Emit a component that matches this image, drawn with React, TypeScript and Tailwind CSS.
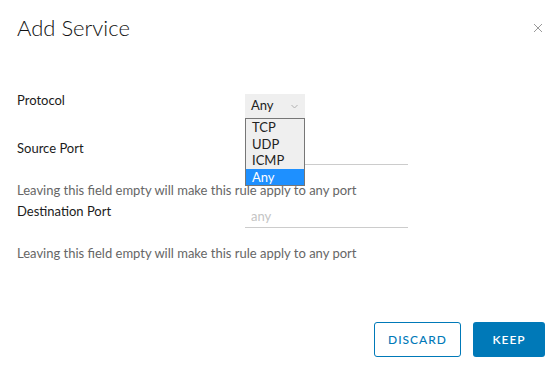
import React from "react";

const options = ["TCP", "UDP", "ICMP", "Any"];

function Row({ label, children }: { label: string; children: React.ReactNode }) {
  return (
    <div className="flex items-start">
      <div className="w-[228px] shrink-0 text-[13px] leading-4 text-[#1b1b1b]">{label}</div>
      {children}
    </div>
  );
}

function PortInput() {
  return (
    <input
      className="mt-px h-6 w-[163px] border-b border-[#cccccc] bg-transparent px-[6px] text-[13px] text-[#333] outline-none placeholder:text-[#c4c4c4]"
      placeholder="any"
    />
  );
}

function Help() {
  return (
    <p className="text-[13px] leading-4 text-[#666666]">
      Leaving this field empty will make this rule apply to any port
    </p>
  );
}

export default function App() {
  return (
    <div className="relative h-[370px] w-[557px] bg-white font-['Lato',sans-serif]">
      <div className="flex items-center justify-between pl-[17px] pr-[14px] pt-[14px]">
        <h1 className="text-[22px] font-light leading-7 text-[#111]">Add Service</h1>
        <button className="text-[#9a9a9a]">
          <svg width="10" height="10" viewBox="0 0 10 10" stroke="currentColor" strokeWidth="1">
            <path d="M1 1 L9 9 M9 1 L1 9" />
          </svg>
        </button>
      </div>

      <div className="flex flex-col px-[17px] pt-[50px]">
        <Row label="Protocol">
          <div className="relative mt-[2px]">
            <div className="flex h-6 w-[60px] items-center justify-between bg-[#efefef] pl-[6px] pr-[7px] text-[13px] text-[#222]">
              <span>Any</span>
              <svg width="7" height="5" viewBox="0 0 7 5" fill="none" stroke="#b0b0b0" strokeWidth="1">
                <path d="M0.5 1 L3.5 4 L6.5 1" />
              </svg>
            </div>
            <ul className="absolute left-0 top-6 z-10 w-[60px] border border-[#767676] bg-[#efefef] text-[13px] leading-[16.5px] text-[#222]">
              {options.map((o) => (
                <li
                  key={o}
                  className={o === "Any" ? "bg-[#1e90ff] pl-[6px] text-white" : "pl-[6px]"}
                >
                  {o}
                </li>
              ))}
            </ul>
          </div>
        </Row>

        <div className="mt-[22px]">
          <Row label="Source Port">
            <PortInput />
          </Row>
        </div>
        <div className="mt-[17px]">
          <Help />
        </div>

        <div className="mt-[5px]">
          <Row label="Destination Port">
            <PortInput />
          </Row>
        </div>
        <div className="mt-[17px]">
          <Help />
        </div>
      </div>

      <div className="flex justify-end gap-3 pr-3 pt-[61px]">
        <button className="h-[35px] w-[87px] rounded-[3px] border border-[#0079b8] text-[12px] font-medium tracking-[1px] text-[#0079b8]">
          DISCARD
        </button>
        <button className="h-[35px] w-[72px] rounded-[3px] bg-[#0079b8] text-[12px] font-semibold tracking-[1px] text-white">
          KEEP
        </button>
      </div>
    </div>
  );
}
